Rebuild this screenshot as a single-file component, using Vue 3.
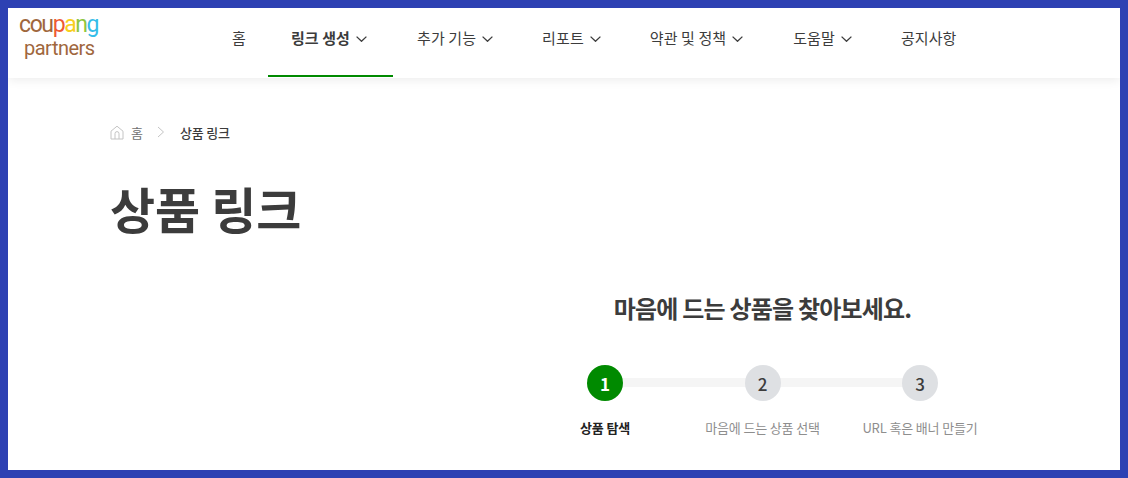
<template>
  <div class="frame">
    <header class="top">
      <a class="logo">
        <span class="logo-main">cou<i class="c-p">p</i><i class="c-a">a</i><i class="c-n">n</i><i class="c-g">g</i></span>
        <span class="logo-sub">partners</span>
      </a>
      <nav class="nav">
        <a v-for="item in navItems" :key="item.label" :class="['nav-item', { active: item.active }]">
          <span>{{ item.label }}</span>
          <svg v-if="item.menu" class="chev" width="11" height="6" viewBox="0 0 11 6">
            <path d="M.6.6l4.9 4.7L10.4.6" fill="none" stroke="#3c3c3c" stroke-width="1.3" />
          </svg>
        </a>
      </nav>
    </header>

    <main class="page">
      <div class="crumbs">
        <svg class="home" width="14" height="15" viewBox="0 0 14 15">
          <path d="M1 6.2L7 1.2l6 5V14H1z" fill="none" stroke="#c4c4c4" stroke-width="1" />
          <path d="M5 14V8.6a2 2 0 0 1 4 0V14" fill="none" stroke="#c4c4c4" stroke-width="1" />
        </svg>
        <span class="crumb-home">홈</span>
        <svg class="crumb-sep" width="8" height="12" viewBox="0 0 8 12">
          <path d="M1 1l5.5 5L1 11" fill="none" stroke="#c4c4c4" stroke-width="1" />
        </svg>
        <span class="crumb-now">상품 링크</span>
      </div>
      <h1 class="title">상품 링크</h1>

      <section class="finder">
        <h2 class="finder-title">마음에 드는 상품을 찾아보세요.</h2>
        <ol class="steps">
          <li v-for="(step, i) in steps" :key="step" :class="['step', { current: i === 0 }]">
            <span class="num">{{ i + 1 }}</span>
            <span class="label">{{ step }}</span>
          </li>
        </ol>
      </section>
    </main>
  </div>
</template>

<script setup>
const navItems = [
  { label: '홈' },
  { label: '링크 생성', menu: true, active: true },
  { label: '추가 기능', menu: true },
  { label: '리포트', menu: true },
  { label: '약관 및 정책', menu: true },
  { label: '도움말', menu: true },
  { label: '공지사항' },
];

const steps = ['상품 탐색', '마음에 드는 상품 선택', 'URL 혹은 배너 만들기'];
</script>

<style>
html,
body {
  margin: 0;
  background: #fff;
}
</style>

<style scoped>
.frame {
  box-sizing: border-box;
  width: 1128px;
  height: 478px;
  border: 8px solid #2d41b3;
  overflow: hidden;
  background: #fff;
  font-family: "Noto Sans CJK KR", "Noto Sans", sans-serif;
  color: #3c3c3c;
}

.top {
  display: flex;
  height: 70px;
  box-shadow: 0 2px 10px rgba(0, 0, 0, 0.08);
}

.logo {
  display: flex;
  flex-direction: column;
  width: 200px;
  padding: 5px 0 0 11px;
  box-sizing: border-box;
  font-family: Roboto, sans-serif;
  color: #a0673d;
}

.logo-main {
  font-size: 23px;
  line-height: 23px;
  letter-spacing: -1.4px;
}

.logo-main i {
  font-style: normal;
}

.c-p { color: #ee5a33; }
.c-a { color: #f8cf1e; }
.c-n { color: #8cc63f; }
.c-g { color: #35bde8; }

.logo-sub {
  margin-left: 5px;
  font-size: 20px;
  line-height: 25px;
  letter-spacing: -0.5px;
}

.nav {
  display: flex;
}

.nav-item {
  display: flex;
  align-items: center;
  gap: 6px;
  height: 69px;
  padding: 0 25px 11px 24px;
  box-sizing: border-box;
  font-size: 15px;
  letter-spacing: 0.1px;
}

.nav-item:first-child {
  padding-right: 22px;
}

.nav-item:nth-child(5) {
  padding-right: 26px;
}

.nav-item.active {
  font-weight: 700;
  border-bottom: 2px solid #008a00;
  padding: 0 26px 9px 23px;
}

.chev {
  margin-top: 4px;
}

.page {
  padding: 44px 0 0 102px;
}

.crumbs {
  display: flex;
  align-items: center;
  height: 20px;
  font-size: 13px;
}

.crumb-home {
  margin-left: 7px;
  color: #6f6f6f;
}

.crumb-sep {
  margin: 0 15px 0 14px;
}

.crumb-now {
  font-weight: 500;
  letter-spacing: -0.2px;
}

.title {
  margin: 31px 0 0;
  font-size: 49px;
  line-height: 70px;
  font-weight: 700;
}

.finder {
  width: 473px;
  margin: 49px 0 0 416px;
}

.finder-title {
  margin: 0;
  text-align: center;
  font-size: 24px;
  line-height: 32px;
  font-weight: 700;
  letter-spacing: -0.8px;
}

.steps {
  position: relative;
  display: grid;
  grid-template-columns: 158px 157px 158px;
  margin: 41px 0 0;
  padding: 0;
  list-style: none;
}

.steps::before {
  content: "";
  position: absolute;
  top: 13px;
  left: 79px;
  right: 79px;
  height: 9px;
  background: #f5f5f5;
}

.step {
  position: relative;
  display: flex;
  flex-direction: column;
  align-items: center;
}

.num {
  display: flex;
  align-items: center;
  justify-content: center;
  width: 36px;
  height: 36px;
  border-radius: 50%;
  background: #dee0e3;
  font-size: 17px;
  font-weight: 500;
}

.label {
  margin-top: 17px;
  font-size: 13px;
  line-height: 20px;
  letter-spacing: -0.15px;
  color: #8e8e8e;
  white-space: nowrap;
}

.current .num {
  background: #008a00;
  color: #fff;
  font-weight: 700;
}

.current .label {
  font-weight: 700;
  color: #222;
}
</style>
